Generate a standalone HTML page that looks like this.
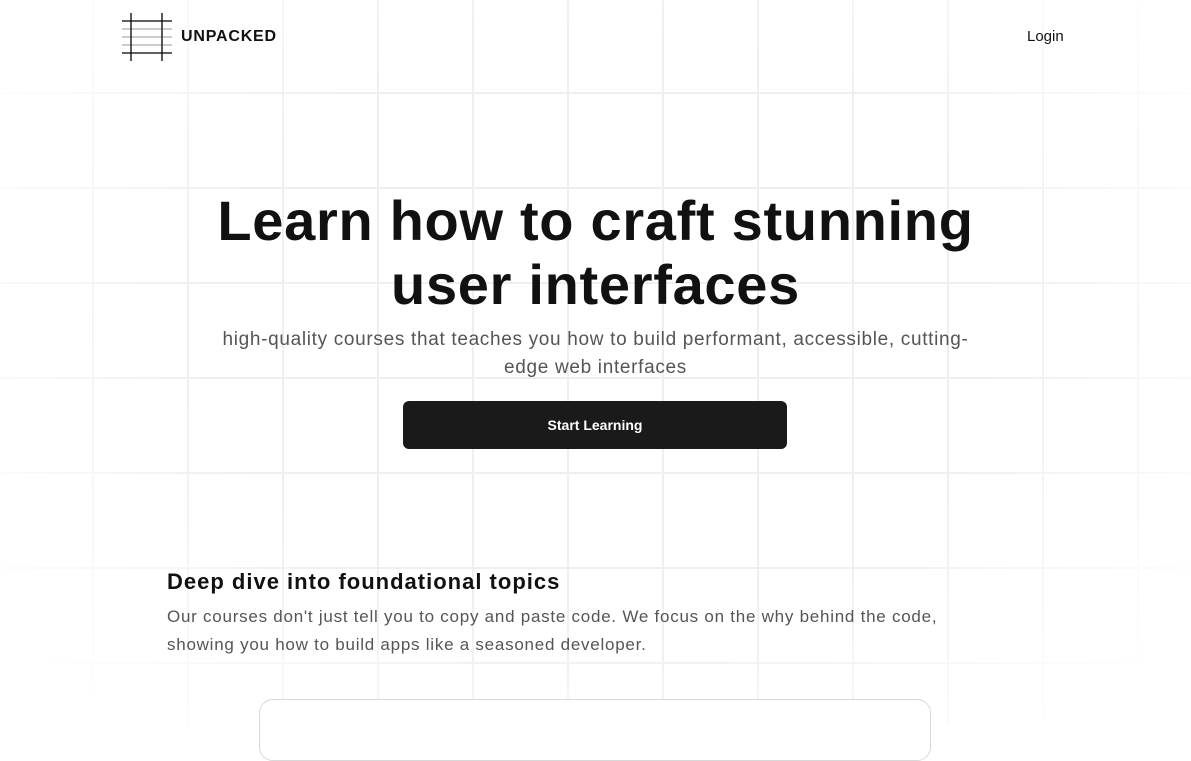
<!DOCTYPE html>
<html><head><meta charset="utf-8"><style>
html,body{margin:0;padding:0;width:1191px;height:724px;overflow:hidden;background:#fff;font-family:"Liberation Sans",sans-serif;}
.grid{position:absolute;inset:0;
background-image:linear-gradient(to right,#efefef 2px,transparent 2px),linear-gradient(to bottom,#efefef 2px,transparent 2px);
background-size:95px 95px;background-position:92px 92px;
-webkit-mask-image:radial-gradient(ellipse 60% 75% at 50% 45%,#000 55%,transparent 100%);}
.abs{position:absolute}
h1{position:absolute;left:0;width:1191px;top:189px;margin:0;text-align:center;font-size:56px;line-height:64px;font-weight:700;color:#111;letter-spacing:0.7px}
.sub{left:0;width:1191px;top:326px;text-align:center;font-size:19px;line-height:28px;color:#555;letter-spacing:0.68px}
.btn{left:403px;top:401px;width:384px;height:48px;background:#1a1a1a;border-radius:6px;color:#fff;font-size:14px;font-weight:700;text-align:center;line-height:48px}
</style></head><body>
<div class="grid"></div>
<svg class="abs" style="left:122px;top:12px" width="50" height="50">
<g stroke="#999" stroke-width="1"><line x1="0" y1="17" x2="50" y2="17"/><line x1="0" y1="25" x2="50" y2="25"/><line x1="0" y1="33" x2="50" y2="33"/></g>
<g stroke="#000" stroke-width="1.3"><line x1="0" y1="9" x2="50" y2="9"/><line x1="0" y1="41" x2="50" y2="41"/><line x1="9" y1="1" x2="9" y2="49"/><line x1="40" y1="1" x2="40" y2="49"/></g>
</svg>
<div class="abs" style="left:181px;top:28px;font-size:16px;font-weight:700;color:#111;letter-spacing:0.8px">UNPACKED</div>
<div class="abs" style="left:1027px;top:28px;font-size:15px;color:#111">Login</div>
<h1>Learn how to craft stunning<br>user interfaces</h1>
<div class="abs sub">high-quality courses that teaches you how to build performant, accessible, cutting-<br>edge web interfaces</div>
<div class="abs btn">Start Learning</div>
<div class="abs" style="left:167px;top:569px;font-size:22px;font-weight:700;color:#111;letter-spacing:1px">Deep dive into foundational topics</div>
<div class="abs" style="left:167px;top:603px;font-size:17px;line-height:28px;color:#555;letter-spacing:0.75px">Our courses don't just tell you to copy and paste code. We focus on the why behind the code,<br>showing you how to build apps like a seasoned developer.</div>
<div class="abs" style="left:259px;top:699px;width:670px;height:60px;border:1px solid #d8d8d8;border-radius:14px;background:#fff"></div>
</body></html>
